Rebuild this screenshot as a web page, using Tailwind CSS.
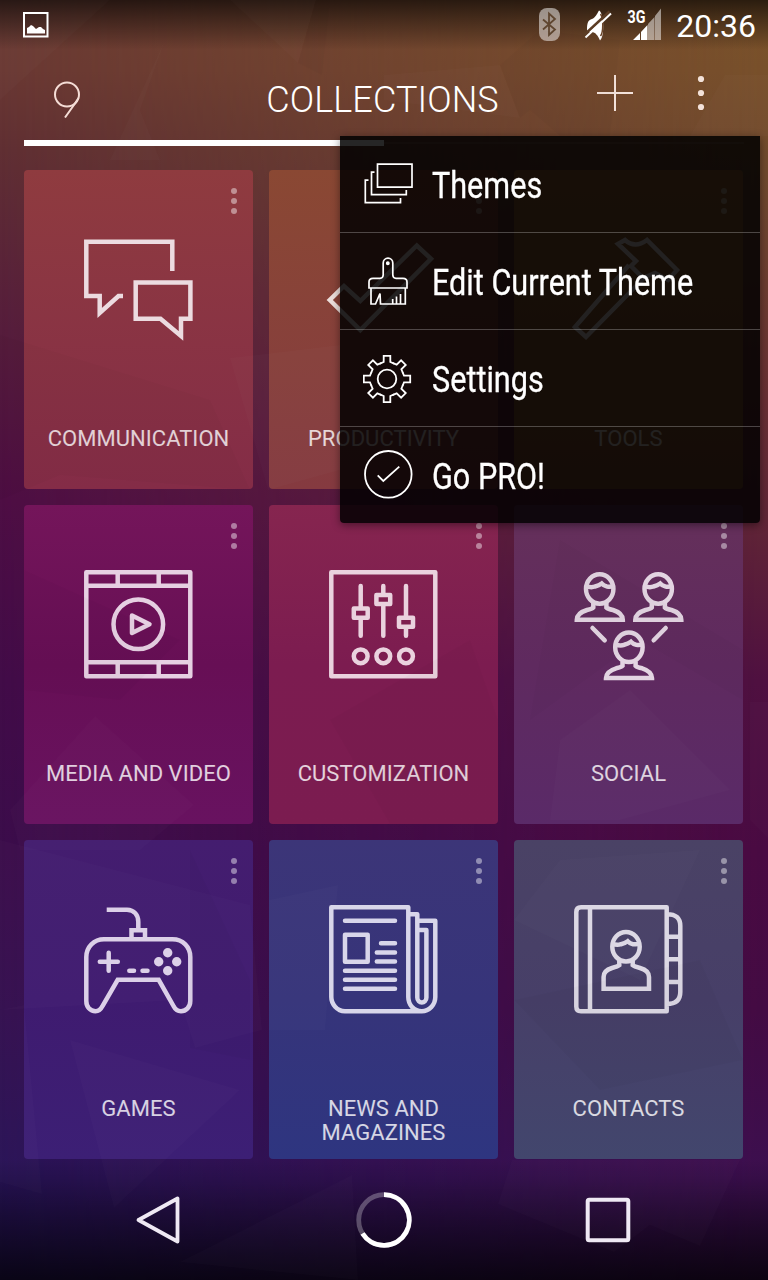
<!DOCTYPE html>
<html lang="en">
<head>
<meta charset="utf-8">
<title>Collections</title>
<script src="https://cdn.jsdelivr.net/npm/@tailwindcss/browser@4"></script>
</head>
<body class="bg-black">
<div class="relative w-[768px] h-[1280px] overflow-hidden flex flex-col font-['Roboto',sans-serif] text-white bg-[linear-gradient(180deg,#6b3c33_0px,#6a3833_70px,#602f33_150px,#561d3c_330px,#4e0e44_500px,#420c48_680px,#3b0d4b_850px,#341050_1010px,#281357_1180px,#20104a_1280px)]">

  <!-- wallpaper -->
  <div class="absolute inset-0 [mask-image:linear-gradient(90deg,transparent,black)] bg-[linear-gradient(180deg,#7a522a_0px,#78502b_70px,#704a2e_170px,#682f34_400px,#602536_520px,#4f1040_680px,#4a0a42_850px,#440b43_1010px,#3d0f4f_1180px,#2a0a38_1280px)]"></div>

  <!-- status bar -->
  <div class="absolute inset-x-0 top-0 h-[50px] bg-linear-to-b from-black/65 to-transparent"></div>
  <div class="absolute inset-x-0 bottom-0 h-[120px] bg-linear-to-b from-transparent to-black/70"></div>
  <div class="relative h-[50px] shrink-0 flex items-center pl-[23px] pr-3">
    <svg class="w-[26px] h-[26px]" viewBox="0 0 26 26"><rect x="1" y="1" width="23.5" height="23.5" fill="none" stroke="#fff" stroke-width="2"/><path d="M4 21.5V16l2-1 2-2 2 1 3 3 3-2h2l2 2 2 1v3.500z" fill="#fff"/></svg>
    <svg class="w-[124px] h-[34px] ml-auto mr-[14px]" viewBox="538 8 124 34">
      <rect x="539" y="8" width="21" height="33" rx="8" fill="#fff" fill-opacity=".5"/>
      <path d="M543 19.500L555 29.500L549 35V13.500L555 19L543 29.500" fill="none" stroke="#5f4630" stroke-width="1.800"/>
      <path d="M587 30c0-7 1-10 5-11 3-1 5-5 7-8.500 5 2 6 26 1 30-2-5-5-8.500-8-8.500-3 0-5 0-5-2z" fill="#fff"/>
      <path d="M600.500 14c3 4 3 18 0 22" fill="none" stroke="#6a4429" stroke-width="1.500"/>
      <path d="M583.500 35.500L609.500 11.500" stroke="#5c3d25" stroke-width="2.500"/>
      <path d="M585.500 37.500L611 13.500" stroke="#fff" stroke-width="2"/>
      <text x="627.500" y="23" font-size="18.500" font-weight="700" fill="#fff" textLength="18" lengthAdjust="spacingAndGlyphs">3G</text>
      <path d="M633 40l7-7v7zM641 32l6.500-7v15H641z" fill="#fff"/>
      <path d="M648 24l6.500-7v23H648zM655 16l6-7.500V40h-6z" fill="#fff" fill-opacity=".5"/>
    </svg>
    <span class="text-[32px] leading-none mt-[1px]">20:36</span>
  </div>

  <!-- title bar -->
  <header class="relative h-[90px] shrink-0 grid grid-cols-[241px_283px_1fr] items-center">
    <svg class="w-[28px] h-[38px] ml-[53px] mt-[8px]" viewBox="53 79 28 38"><g fill="none" stroke="#f5ddd6" stroke-width="2"><circle cx="67" cy="93.500" r="12"/><path d="M78.500 97L75 102.500L65 116.500"/></g></svg>
    <h1 class="text-[36px] font-light leading-none text-center mt-[10px] whitespace-nowrap tracking-[0.1px]">COLLECTIONS</h1>
    <svg class="w-[112px] h-[38px] ml-[72px] -mt-[4px]" viewBox="596 74 112 38"><path d="M597 93H633M615 75V111" stroke="#f3e2da" stroke-width="2"/><g fill="#f3e2da"><circle cx="701" cy="79" r="3.100"/><circle cx="701" cy="93" r="3.100"/><circle cx="701" cy="107" r="3.100"/></g></svg>
  </header>
  <div class="relative mx-6 h-[6px] shrink-0 flex items-center"><div class="w-[360px] h-[6px] bg-white"></div><div class="grow h-[2px] bg-white/10"></div></div>

  <!-- collections -->
  <main class="relative mt-6 ml-6 grid grid-cols-[229px_229px_229px] auto-rows-[319px] gap-4 shrink-0 text-[22px] leading-6 tracking-[0.05px] text-center text-white/80">
    <section class="rounded bg-linear-to-b from-[#8f3b3f] to-[#842c47] flex flex-col">
      <svg class="w-[6px] h-[26px] ml-[207px] mt-[18px]" viewBox="0 0 6 26" fill="#fff" fill-opacity=".44"><circle cx="3" cy="3" r="3"/><circle cx="3" cy="13" r="3"/><circle cx="3" cy="23" r="3"/></svg>
      <svg class="w-[108px] h-[108px] ml-[60px] mt-[21px] overflow-visible" viewBox="0 0 108 108" fill="none" stroke="#ecdbe0" stroke-width="4.500"><path d="M88.300 36V6.700H2.300V61H15.700V78L34.500 61H39M51.700 47.500H106.400V83.700H97V101L76.500 83.700H51.700Z"/></svg>
      <p class="mt-[84px]">COMMUNICATION</p>
    </section>
    <section class="rounded bg-linear-to-b from-[#8a4833] to-[#853a40] flex flex-col">
      <svg class="w-[6px] h-[26px] ml-[207px] mt-[18px]" viewBox="0 0 6 26" fill="#fff" fill-opacity=".44"><circle cx="3" cy="3" r="3"/><circle cx="3" cy="13" r="3"/><circle cx="3" cy="23" r="3"/></svg>
      <svg class="w-[108px] h-[108px] ml-[60px] mt-[21px] overflow-visible" viewBox="0 0 108 108" fill="none" stroke="#ecdfdc" stroke-width="4.500"><path d="M.800 65L31.300 95L102 23.800L87.800 10.500L31.300 66L15 51Z"/></svg>
      <p class="mt-[84px]">PRODUCTIVITY</p>
    </section>
    <section class="rounded bg-linear-to-b from-[#98622f] to-[#885334] flex flex-col">
      <svg class="w-[6px] h-[26px] ml-[207px] mt-[18px]" viewBox="0 0 6 26" fill="#fff" fill-opacity=".44"><circle cx="3" cy="3" r="3"/><circle cx="3" cy="13" r="3"/><circle cx="3" cy="23" r="3"/></svg>
      <svg class="w-[108px] h-[108px] ml-[60px] mt-[21px] overflow-visible" viewBox="0 0 108 108" fill="none" stroke="#ecdfdc" stroke-width="4.500"><path d="M55 30L1 92L12 102L70 43M44 9L51 5Q61 14 73 5L103 35L94 45L81 38L69 43L57 31L62 26Z"/></svg>
      <p class="mt-[84px]">TOOLS</p>
    </section>

    <section class="rounded bg-linear-to-b from-[#74155a] via-[#670f55] to-[#681260] flex flex-col">
      <svg class="w-[6px] h-[26px] ml-[207px] mt-[18px]" viewBox="0 0 6 26" fill="#fff" fill-opacity=".44"><circle cx="3" cy="3" r="3"/><circle cx="3" cy="13" r="3"/><circle cx="3" cy="23" r="3"/></svg>
      <svg class="w-[108px] h-[108px] ml-[60px] mt-[21px] overflow-visible" viewBox="0 0 108 108" fill="none" stroke="#e6d0e2" stroke-width="4.500" stroke-linejoin="round"><path d="M2.300 2.300H106.300V106.300H2.300ZM2.300 15.700H106M2.300 92.300H106M33.700 2V15M74.700 2V15M33.700 92V106M74.700 92V106M48 45.500L65.500 54.300L48 63Z"/><circle cx="54.300" cy="54.300" r="24.800"/></svg>
      <p class="mt-[84px]">MEDIA AND VIDEO</p>
    </section>
    <section class="rounded bg-linear-to-b from-[#86254f] via-[#7c1c50] to-[#7b1c50] flex flex-col">
      <svg class="w-[6px] h-[26px] ml-[207px] mt-[18px]" viewBox="0 0 6 26" fill="#fff" fill-opacity=".44"><circle cx="3" cy="3" r="3"/><circle cx="3" cy="13" r="3"/><circle cx="3" cy="23" r="3"/></svg>
      <svg class="w-[108px] h-[108px] ml-[60px] mt-[21px] overflow-visible" viewBox="0 0 108 108" fill="none" stroke="#ead2de" stroke-width="4.500" stroke-linejoin="round" stroke-linecap="round"><path d="M2.300 2.300H106.300V106.300H2.300ZM31.700 16V38M31.700 49V65.700M54.300 16V25M54.300 36V65.700M77 16V47M77 58V65.700M24.800 38.600H38.700V47.700H24.800ZM47.400 24.900H61.200V34H47.400ZM70 47.700H84V56.800H70Z"/><circle cx="31.700" cy="86.300" r="6.900"/><circle cx="54.300" cy="86.300" r="6.900"/><circle cx="77" cy="86.300" r="6.900"/></svg>
      <p class="mt-[84px]">CUSTOMIZATION</p>
    </section>
    <section class="rounded bg-linear-to-b from-[#65305a] via-[#5f2a5f] to-[#5a2a68] flex flex-col">
      <svg class="w-[6px] h-[26px] ml-[207px] mt-[18px]" viewBox="0 0 6 26" fill="#fff" fill-opacity=".44"><circle cx="3" cy="3" r="3"/><circle cx="3" cy="13" r="3"/><circle cx="3" cy="23" r="3"/></svg>
      <svg class="w-[108px] h-[108px] ml-[60px] mt-[21px] overflow-visible" viewBox="0 0 108 108" fill="none" stroke="#e3d5e2" stroke-width="4.500">
        <defs><g id="person"><ellipse cx="25.700" cy="19" rx="13.700" ry="14.700"/><path d="M12 16Q17 18 21 16.500Q25 15.500 27.700 13.500Q30 16 33 16.500Q37 17 40 16M19.300 33V37.500Q18 39 13 40Q3 43 2.800 49.800H48.800Q48.600 43 39 40Q34 39 32.400 37.500V33"/></g></defs>
        <use href="#person"/><use href="#person" x="58.500"/><use href="#person" x="29.200" y="58.300"/><path d="M18.500 58L30.700 70.300M91.700 58L79.700 70.300" stroke-linecap="round"/></svg>
      <p class="mt-[84px]">SOCIAL</p>
    </section>

    <section class="rounded bg-linear-to-b from-[#441d6f] via-[#3f1b70] to-[#3c1f75] flex flex-col">
      <svg class="w-[6px] h-[26px] ml-[207px] mt-[18px]" viewBox="0 0 6 26" fill="#fff" fill-opacity=".44"><circle cx="3" cy="3" r="3"/><circle cx="3" cy="13" r="3"/><circle cx="3" cy="23" r="3"/></svg>
      <svg class="w-[108px] h-[108px] ml-[60px] mt-[21px] overflow-visible" viewBox="0 0 108 108" fill="none" stroke="#dcd0e8" stroke-width="4.500"><path d="M22.700 4.700H43C50 5 54.300 10 54.300 17V23M47.500 33V25.200H61V33M20 34.200H88.500C99 34.200 106.300 42 106.300 52V96C106.300 102 102 106.200 97 106.200C93 106.200 91 104 89.500 101L74.700 74.800H33.700L18.500 101C17 104 15 106.200 11.500 106.200C6 106.200 2.300 102 2.300 96V52C2.300 42 10 34.200 20 34.200Z"/><path stroke-linecap="round" d="M15.800 56.700H33.800M24.700 47.700V65.700M45.300 65.700H50M58.500 65.700H63.500"/><g fill="#dcd0e8" stroke="none"><circle cx="83.700" cy="47.700" r="4.700"/><circle cx="74.700" cy="56.700" r="4.700"/><circle cx="92.700" cy="56.700" r="4.700"/><circle cx="83.700" cy="65.700" r="4.700"/></g></svg>
      <p class="mt-[84px]">GAMES</p>
    </section>
    <section class="rounded bg-linear-to-b from-[#3c3578] via-[#36347a] to-[#2e3580] flex flex-col">
      <svg class="w-[6px] h-[26px] ml-[207px] mt-[18px]" viewBox="0 0 6 26" fill="#fff" fill-opacity=".44"><circle cx="3" cy="3" r="3"/><circle cx="3" cy="13" r="3"/><circle cx="3" cy="23" r="3"/></svg>
      <svg class="w-[108px] h-[108px] ml-[60px] mt-[21px] overflow-visible" viewBox="0 0 108 108" fill="none" stroke="#d8d6ea" stroke-width="4.500" stroke-linejoin="round"><path d="M92.500 106.200H16C8 106 2.300 99 2.300 92V2.300H79.300V92C79.300 100 85 106.200 92.800 106.200C100 106.200 106.300 100 106.300 92V15.800H88.500M79.300 9.200H88.300V92.500C88.300 99 97.400 99 97.400 92.500V25H89"/><path stroke-linecap="round" d="M16 15.700H66M52 38.300H66M47.800 47.500H66M47.800 56.500H66M16 65.700H66M16 74.700H66M16 83.700H66M16 29.700H38.700V56.700H16Z"/></svg>
      <p class="mt-[84px]">NEWS AND<br>MAGAZINES</p>
    </section>
    <section class="rounded bg-linear-to-b from-[#4a4265] via-[#473f68] to-[#42466d] flex flex-col">
      <svg class="w-[6px] h-[26px] ml-[207px] mt-[18px]" viewBox="0 0 6 26" fill="#fff" fill-opacity=".44"><circle cx="3" cy="3" r="3"/><circle cx="3" cy="13" r="3"/><circle cx="3" cy="23" r="3"/></svg>
      <svg class="w-[108px] h-[108px] ml-[60px] mt-[21px] overflow-visible" viewBox="0 0 108 108" fill="none" stroke="#dcd8e4" stroke-width="4.500" stroke-linejoin="round"><path d="M7 2.300H92.700V106.300H7Q2.300 106.300 2.300 101.500V7Q2.300 2.300 7 2.300ZM16 2.300V106M92.700 9.200Q106.300 9 106.300 21V87Q106.300 99 92.700 99M92.700 31.700H106M92.700 54.300H106M92.700 77H106"/><g stroke-linejoin="miter"><ellipse cx="52" cy="41.700" rx="13.700" ry="14.700"/><path d="M38 38.700Q43 40.700 47 39.200Q51 38.200 53.700 36.200Q56 38.700 59 39.200Q63 39.700 66 38.700M45.300 55.700V60.200Q44 61.500 38 63Q29.600 65.500 29.600 72V83.800H75V72Q75 65.500 66 63Q60 61.500 58.700 60.200V55.700"/></g></svg>
      <p class="mt-[84px]">CONTACTS</p>
    </section>
  </main>

  <!-- low-poly facets of the wallpaper -->
  <svg class="absolute inset-0 w-[768px] h-[1280px] pointer-events-none" viewBox="0 0 768 1280">
    <g fill="#fff" fill-opacity=".014">
      <path d="M0 0H110L0 100ZM165 40L140 110L160 160L110 160ZM230 0L298 63L316 0ZM384 75L500 65L520 118L384 100ZM725 75H768V136H690Z"/>
      <path d="M230 358L340 345V470L268 490ZM95 716L194 805L140 850H20L10 810ZM560 740L630 690L730 790L620 820H550Z"/>
      <path d="M0 840L250 905L262 1030L195 1048L180 1000L0 1010ZM269 900L338 885L325 1030L269 1030ZM750 702H768V838L750 820ZM560 860L700 850L640 980L514 920Z"/>
      <path d="M0 1010L24 1005L42 1194L0 1182ZM512 1160H740L700 1246L650 1225L614 1252L498 1204ZM70 1040L240 1090L114 1208ZM352 1175L180 1262L358 1280Z"/>
    </g>
    <g fill="#000" fill-opacity=".018">
      <path d="M298 63L316 0H330L322 75ZM500 65L540 30L620 40L610 136H560L530 110L520 118ZM0 335L210 400L250 490L60 475L0 500Z"/>
      <path d="M24 570L180 640L120 700L24 690ZM330 720L470 640L498 720V824H390ZM560 540L743 650V700L640 640L530 720ZM190 850L250 980V1060L190 1048ZM514 1000L700 960L743 1060L600 1090Z"/>
    </g>
  </svg>

  <!-- navigation bar -->
  <nav class="relative grow grid grid-cols-[221px_365px_1fr] items-center pl-[135px]">
    <svg class="w-[46px] h-[50px]" viewBox="0 0 46 50"><path d="M42.500 3.500V46.500L3.500 25Z" fill="none" stroke="#efe9f4" stroke-width="3.800" stroke-linejoin="round"/></svg>
    <svg class="w-[56px] h-[56px]" viewBox="-28 -28 56 56" fill="none" stroke-width="4.800"><circle r="25.300" stroke="#fff" stroke-opacity=".28"/><path d="M0-25.300A25.300 25.300 0 1 1-21.500 13.400" stroke="#fff"/></svg>
    <svg class="w-[46px] h-[46px] -ml-[136px]" viewBox="0 0 46 46"><rect x="2.700" y="2.700" width="40.600" height="40.600" rx="1.500" fill="none" stroke="#efe9f4" stroke-width="4"/></svg>
  </nav>

  <!-- overflow menu -->
  <div class="absolute left-[340px] top-[136px] w-[420px] h-[387px] rounded-b bg-black/85 shadow-[0_2px_8px_rgba(0,0,0,0.45)] flex flex-col text-[36px] leading-none font-normal whitespace-nowrap [-webkit-text-stroke:0.3px_white]">
    <div class="h-[97px] flex items-center pl-[23px] border-b border-white/25">
      <svg class="w-[50px] h-[50px] mr-[19px]" viewBox="0 -1 50 50" fill="none" stroke="#fff" stroke-width="1.700"><path d="M14.500 4.200H49V27.200H14.500ZM11.500 12.200H8.500V34.700H43.300V30M5.500 20.200H2.300V42.700H37.500V38"/></svg>
      <span class="mt-[4px] origin-left scale-x-[0.85]">Themes</span>
    </div>
    <div class="h-[97px] flex items-center pl-[23px] border-b border-white/25">
      <svg class="w-[50px] h-[50px] mr-[19px]" viewBox="0 -1 50 50" fill="none" stroke="#fff" stroke-width="1.700"><path d="M10 21.300H17Q20 21.300 20.200 18V6A4.800 4.800 0 0 1 29.800 6V18Q30 21.300 33 21.300H40Q44 21.300 44 25V31H6V25Q6 21.300 10 21.300ZM8 31V47H12.500L17 36.500L17.500 47H42.300V31M29.700 47V42M33.500 47V39.500M37.500 47V37"/><circle cx="24.800" cy="6.300" r="1.100" fill="#fff"/></svg>
      <span class="mt-[4px] origin-left scale-x-[0.85]">Edit Current Theme</span>
    </div>
    <div class="h-[97px] flex items-center pl-[23px] border-b border-white/25">
      <svg class="w-[50px] h-[50px] mr-[19px]" viewBox="-24 -26 50 50" fill="none" stroke="#fff" stroke-width="1.800" stroke-linecap="round">
        <defs><path id="tooth" d="M-6.500-15.700L-3.300-17V-23.200H3.300V-17L6.500-15.700"/></defs>
        <use href="#tooth"/><use href="#tooth" transform="rotate(45)"/><use href="#tooth" transform="rotate(90)"/><use href="#tooth" transform="rotate(135)"/><use href="#tooth" transform="rotate(180)"/><use href="#tooth" transform="rotate(225)"/><use href="#tooth" transform="rotate(270)"/><use href="#tooth" transform="rotate(315)"/><circle r="9.300"/></svg>
      <span class="mt-[4px] origin-left scale-x-[0.85]">Settings</span>
    </div>
    <div class="h-[96px] flex items-center pl-[23px]">
      <svg class="w-[50px] h-[50px] mr-[19px]" viewBox="0 1 50 50" fill="none" stroke="#fff" stroke-width="1.800"><circle cx="25.300" cy="25.300" r="23.300"/><path d="M14.700 26.300L20.300 32L36.300 17.700"/></svg>
      <span class="mt-[4px] origin-left scale-x-[0.85]">Go PRO!</span>
    </div>
  </div>
</div>
</body>
</html>
